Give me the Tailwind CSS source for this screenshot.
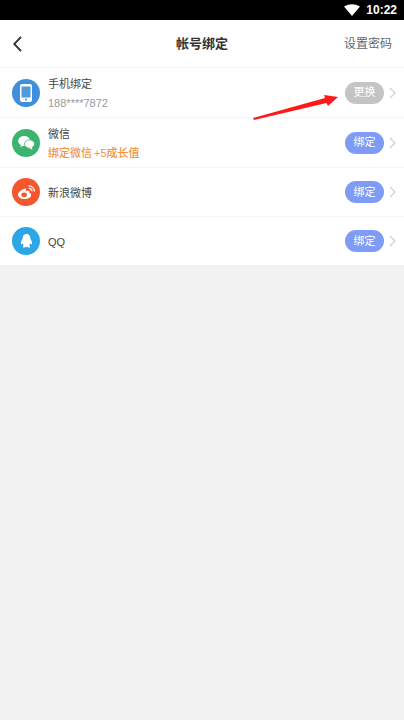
<!DOCTYPE html>
<html lang="zh-CN">
<head>
  <meta charset="UTF-8">
  <title>帐号绑定</title>
  <script src="https://cdn.jsdelivr.net/npm/@tailwindcss/browser@4"></script>
</head>
<body class="relative w-[404px] h-[720px] overflow-hidden bg-[#f2f2f2] font-['Liberation_Sans','Noto_Sans_CJK_SC',sans-serif]">

  <!-- status bar -->
  <div class="h-[20px] bg-black flex items-center justify-end pr-[7px] gap-[6px] text-white">
    <svg width="16" height="12" viewBox="0 0 16 12"><path d="M0 2.5 Q8 -2 16 2.5 L8 12Z" fill="#fff"/></svg>
    <span class="text-[12px] font-bold leading-none">10:22</span>
  </div>

  <!-- header -->
  <div class="h-[47px] bg-white flex items-center justify-between relative pl-[13px] pr-[12px]">
    <svg width="9" height="16" viewBox="0 0 9 16" fill="none" stroke="#333" stroke-width="1.8"><path d="M8 1 L1.2 8 L8 15"/></svg>
    <span class="absolute left-0 right-0 text-center text-[13px] font-bold text-[#333]">帐号绑定</span>
    <span class="text-[12px] text-[#666]">设置密码</span>
  </div>

  <!-- account rows -->
  <div class="bg-white">
    <div class="h-[50px] flex items-center pl-[12px] pr-[8px] border-t border-[#f5f5f5]">
      <div class="w-[28px] h-[28px] rounded-full bg-[#3f8fdc] flex items-center justify-center">
        <svg width="12" height="18" viewBox="0 0 12 18"><rect width="12" height="18" rx="2" fill="#fff"/><rect x="1.5" y="2.5" width="9" height="11" fill="#4f9be0"/><circle cx="6" cy="15.7" r="1.1" fill="#4f9be0"/></svg>
      </div>
      <div class="ml-[8px] flex-1">
        <div class="text-[11px] leading-[16px] mt-[1px] text-[#444]">手机绑定</div>
        <div class="text-[11px] leading-[16px] mt-[3px] text-[#999]">188****7872</div>
      </div>
      <div class="w-[39px] h-[22px] rounded-full bg-[#c4c4c4] text-white text-[11px] flex items-center justify-center">更换</div>
      <svg class="ml-[5px]" width="7" height="12" viewBox="0 0 7 12" fill="none" stroke="#d4d4d4" stroke-width="1.4"><path d="M1 1 L6 6 L1 11"/></svg>
    </div>

    <div class="h-[50px] flex items-center pl-[12px] pr-[8px] border-t border-[#f5f5f5]">
      <div class="w-[28px] h-[28px] rounded-full bg-[#3cb371] flex items-center justify-center">
        <svg width="17" height="14" viewBox="0 0 17 14"><ellipse cx="6.2" cy="5" rx="6" ry="5" fill="#fff"/><path d="M3 8 L2.5 11 L6 9.5Z" fill="#fff"/><ellipse cx="11.5" cy="8" rx="5" ry="4.2" fill="#fff" stroke="#3cb371" stroke-width="0.8"/><path d="M13.5 11 L14.5 13.8 L11 12Z" fill="#fff"/></svg>
      </div>
      <div class="ml-[8px] flex-1">
        <div class="text-[11px] leading-[16px] mt-[1px] text-[#444]">微信</div>
        <div class="text-[11px] leading-[16px] mt-[3px] text-[#f6923e] font-medium [word-spacing:-1px]">绑定微信 +5成长值</div>
      </div>
      <div class="w-[39px] h-[22px] rounded-full bg-[#7e9cf6] text-white text-[11px] flex items-center justify-center">绑定</div>
      <svg class="ml-[5px]" width="7" height="12" viewBox="0 0 7 12" fill="none" stroke="#d4d4d4" stroke-width="1.4"><path d="M1 1 L6 6 L1 11"/></svg>
    </div>

    <div class="h-[49px] flex items-center pl-[12px] pr-[8px] border-t border-[#f5f5f5]">
      <div class="w-[28px] h-[28px] rounded-full bg-[#f4572f] flex items-center justify-center">
        <svg width="19" height="16" viewBox="0 0 20 17"><path d="M8 5 C4 6 1 9 1 11.5 C1 14.5 4.5 16 8 16 C12 16 15 14 15 11.5 C15 10 13.5 9.5 13 9.3 C13.6 7.5 12.5 6.7 9.5 7.7 C10 5.5 9.5 4.6 8 5Z" fill="#fff"/><ellipse cx="7.5" cy="11.5" rx="3" ry="2.5" fill="#f4572f"/><path d="M12 2 A6 6 0 0 1 18.5 8 M12.5 4.7 A3 3 0 0 1 15.8 7.8" fill="none" stroke="#fff" stroke-width="1.4"/></svg>
      </div>
      <div class="ml-[8px] flex-1 pt-[2px] text-[11px] text-[#444]">新浪微博</div>
      <div class="w-[39px] h-[22px] rounded-full bg-[#7e9cf6] text-white text-[11px] flex items-center justify-center">绑定</div>
      <svg class="ml-[5px]" width="7" height="12" viewBox="0 0 7 12" fill="none" stroke="#d4d4d4" stroke-width="1.4"><path d="M1 1 L6 6 L1 11"/></svg>
    </div>

    <div class="h-[49px] flex items-center pl-[12px] pr-[8px] border-t border-[#f5f5f5]">
      <div class="w-[28px] h-[28px] rounded-full bg-[#2ba6e6] flex items-center justify-center">
        <svg width="13" height="16" viewBox="0 0 15 17"><path d="M7.5 0.5 C4 0.5 3 3.5 3 6 C2 7.5 0.8 10 1.2 12 C1.6 12.8 2.5 11.7 3 11 C3.2 12.2 3.8 13 4.5 13.7 C3.5 14.2 3 15 3.6 15.6 C4.6 16.4 6.5 15.8 7.5 15.2 C8.5 15.8 10.4 16.4 11.4 15.6 C12 15 11.5 14.2 10.5 13.7 C11.2 13 11.8 12.2 12 11 C12.5 11.7 13.4 12.8 13.8 12 C14.2 10 13 7.5 12 6 C12 3.5 11 0.5 7.5 0.5Z" fill="#fff"/></svg>
      </div>
      <div class="ml-[8px] flex-1 pt-[2px] text-[11px] text-[#444]">QQ</div>
      <div class="w-[39px] h-[22px] rounded-full bg-[#7e9cf6] text-white text-[11px] flex items-center justify-center">绑定</div>
      <svg class="ml-[5px]" width="7" height="12" viewBox="0 0 7 12" fill="none" stroke="#d4d4d4" stroke-width="1.4"><path d="M1 1 L6 6 L1 11"/></svg>
    </div>
  </div>

  <!-- red annotation arrow over the page -->
  <svg class="absolute left-[250px] top-[88px]" width="92" height="34" viewBox="0 0 92 34"><path d="M3 30 L75 10 L74 7 L88 9 L78 18 L76.5 15 L4 32 Z" fill="#ff1a1a"/></svg>
</body>
</html>
